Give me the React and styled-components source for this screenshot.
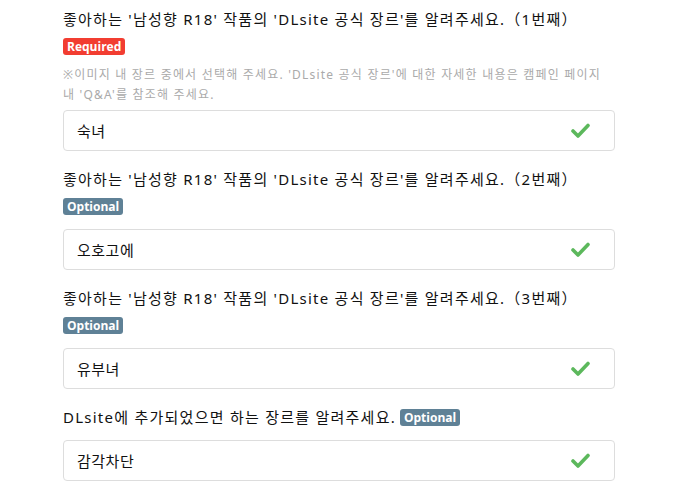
import React from "react";
import styled, { createGlobalStyle } from "styled-components";

const GlobalStyle = createGlobalStyle`
  html, body {
    margin: 0;
    padding: 0;
    background: #fff;
  }
  body {
    font-family: "Noto Sans", "Noto Sans CJK KR", sans-serif;
    color: #111;
  }
`;

const Page = styled.div`
  width: 552px;
  margin: 0 0 0 63px;
  padding-top: 8px;
`;

const Field = styled.div`
  margin-bottom: 17px;
`;

const Label = styled.div`
  font-size: 15px;
  line-height: 22px;
  letter-spacing: 1.25px;
  white-space: nowrap;
`;

const Badge = styled.span`
  display: inline-block;
  font-family: "Open Sans", "Noto Sans", sans-serif;
  font-weight: 700;
  font-size: 12px;
  line-height: 17px;
  height: 17px;
  padding: 0 4px;
  border-radius: 3px;
  color: #fff;
  letter-spacing: 0;
  background: ${(p) => (p.$required ? "#f23d31" : "#5f8196")};
  vertical-align: ${(p) => (p.$inline ? "1px" : "top")};
  margin-left: ${(p) => (p.$inline ? "4px" : "0")};
`;

const BadgeRow = styled.div`
  margin-top: 8px;
  height: 17px;
  line-height: 17px;
`;

const Help = styled.div`
  margin-top: 10px;
  font-size: 12px;
  line-height: 20px;
  color: #aaa;
  letter-spacing: 1.2px;
`;

const InputBox = styled.div`
  margin-top: ${(p) => (p.$tight ? "5px" : p.$inline ? "12px" : "14px")};
  height: 39px;
  border: 1px solid #ddd;
  border-radius: 4px;
  display: flex;
  align-items: center;
  justify-content: space-between;
  padding: 0 24px 0 13px;
  font-size: 15px;
  letter-spacing: 0.5px;
`;

const Check = () => (
  <svg width="19" height="15" viewBox="0 0 19 15">
    <path
      d="M2 8 L7 13 L17 2.5"
      fill="none"
      stroke="#5cb85c"
      strokeWidth="3.6"
      strokeLinecap="round"
      strokeLinejoin="round"
    />
  </svg>
);

const fields = [
  {
    label: "좋아하는 '남성향 R18' 작품의 'DLsite 공식 장르'를 알려주세요.（1번째）",
    required: true,
    help: "※이미지 내 장르 중에서 선택해 주세요. 'DLsite 공식 장르'에 대한 자세한 내용은 캠페인 페이지 내 'Q&A'를 참조해 주세요.",
    value: "숙녀",
  },
  {
    label: "좋아하는 '남성향 R18' 작품의 'DLsite 공식 장르'를 알려주세요.（2번째）",
    value: "오호고에",
  },
  {
    label: "좋아하는 '남성향 R18' 작품의 'DLsite 공식 장르'를 알려주세요.（3번째）",
    value: "유부녀",
  },
  {
    label: "DLsite에 추가되었으면 하는 장르를 알려주세요.",
    inline: true,
    value: "감각차단",
  },
];

export default function App() {
  return (
    <>
      <GlobalStyle />
      <Page>
        {fields.map((f) => (
          <Field key={f.label}>
            <Label>
              {f.label}
              {f.inline && <Badge $inline>Optional</Badge>}
            </Label>
            {!f.inline && (
              <BadgeRow>
                <Badge $required={f.required}>
                  {f.required ? "Required" : "Optional"}
                </Badge>
              </BadgeRow>
            )}
            {f.help && <Help>{f.help}</Help>}
            <InputBox $tight={f.help} $inline={f.inline}>
              <span>{f.value}</span>
              <Check />
            </InputBox>
          </Field>
        ))}
      </Page>
    </>
  );
}
